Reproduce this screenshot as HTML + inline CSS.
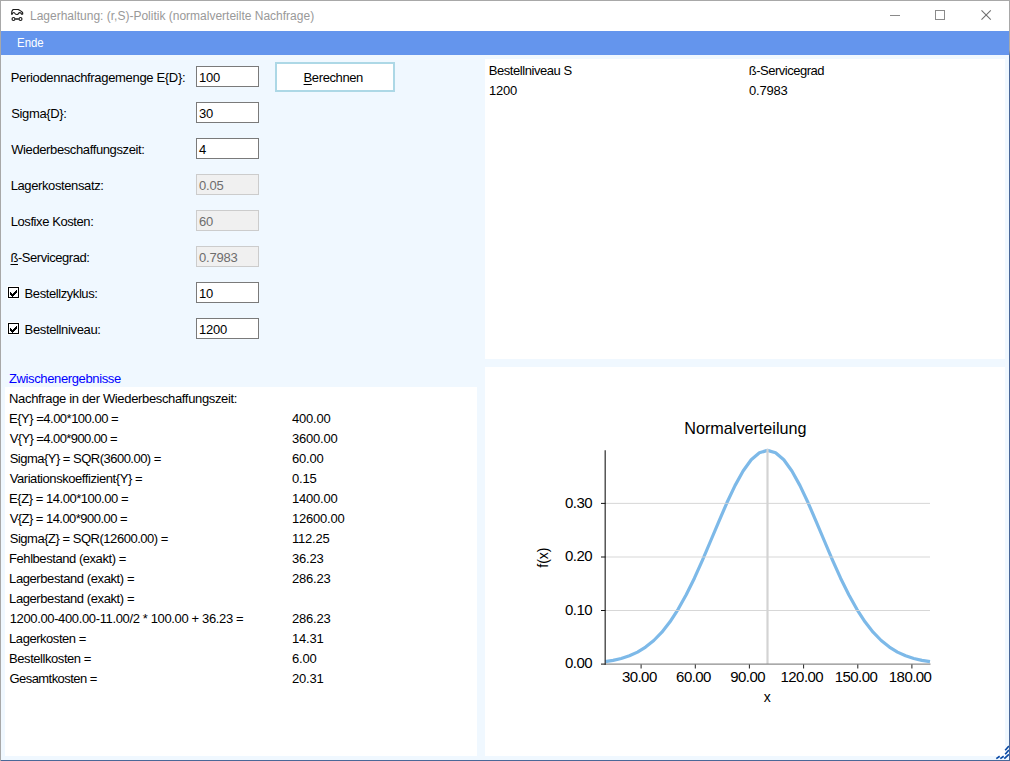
<!DOCTYPE html>
<html lang="de"><head><meta charset="utf-8"><title>Lagerhaltung: (r,S)-Politik (normalverteilte Nachfrage)</title>
<style>
html,body{margin:0;padding:0}
body{width:1010px;height:761px;position:relative;overflow:hidden;background:#4a6898;font-family:"Liberation Sans",Arial,sans-serif;font-size:13px;color:#000}
.abs,.t,.in,.pn{position:absolute}
#edgeL{left:0;top:0;width:1px;height:761px;background:#a8a8a8}
#edgeT{left:0;top:0;width:1010px;height:1px;background:#a8a8a8}
#edgeR{left:1009px;top:0;width:1px;height:761px;background:linear-gradient(#a8a8a8 0,#a8a8a8 50px,#4a6898 56px,#4a6898 100%)}
#win{left:0;top:0;width:1009px;height:760px;background:#f0f8ff}
#title{left:1px;top:1px;width:1008px;height:30px;background:#fff}
#ttext{left:30px;top:1px;height:30px;line-height:31px;font-size:12px;color:#999;white-space:pre}
#menu{left:1px;top:31px;width:1008px;height:24px;background:#6495ed}
#mtext{left:17px;top:31px;height:24px;line-height:25px;font-size:12.3px;color:#fff;white-space:pre;transform:scaleX(.93);transform-origin:0 0}
.t{white-space:pre;line-height:16px;height:16px}
.in{left:196px;width:61px;height:19px;border:1px solid #7a7a7a;background:#fff}
.in.dis{border-color:#ccc;background:#f0f0f0}
.cb{position:absolute;left:8px;width:9px;height:9px;border:1px solid #000;background:#fff;box-shadow:0 0 0 1px #fff}
.pn{background:#fff}
#btn{left:275px;top:62px;width:116px;height:26px;border:2px solid #add8e6;background:#fff}
u{text-underline-offset:1.5px;text-decoration-thickness:1px}
</style></head><body>
<div class="abs" id="win">
<div class="abs" id="title"></div>

<svg class="abs" style="left:10px;top:8px" width="16" height="16" viewBox="0 0 16 16" fill="none" stroke="#1c1c1c" stroke-width="1.2" stroke-linecap="round" stroke-linejoin="round">
<path d="M1.6 6.2 C1.4 4.5 2.0 2.4 3.1 1.5 L8.3 1.5 C9.5 2.2 11.3 3.2 12.3 4.1 C12.8 4.8 12.9 5.5 12.6 6.2 L11.6 6.2 C11.2 5.2 10.6 4.7 9.8 4.7 C9.0 4.7 8.6 5.3 8.2 5.9 C7.9 6.3 7.5 6.5 6.8 6.5 C6.0 6.5 5.5 6.3 5.2 5.8 C4.8 5.0 4.5 4.5 3.8 4.5 C3.0 4.5 2.6 5.2 2.3 6.2 Z"/>
<ellipse cx="3.5" cy="11" rx="1.45" ry="1.5"/><ellipse cx="10.5" cy="11" rx="1.45" ry="1.5"/><path d="M5.2 11 H8.8" stroke-width="1.5" stroke-linecap="butt"/>
</svg>
<div class="abs" id="ttext">Lagerhaltung: (r,S)-Politik (normalverteilte Nachfrage)</div>
<svg class="abs" style="left:881px;top:1px" width="128" height="30" viewBox="0 0 128 30" fill="none" stroke="#8a8a8a" stroke-width="1">
<path d="M9 14.5 H19"/><rect x="54.5" y="9.5" width="9" height="9"/><path d="M100.5 9.3 L109.8 18.6 M109.8 9.3 L100.5 18.6" stroke="#707070" stroke-width="1.1"/></svg>
<div class="abs" id="menu"></div><div class="abs" id="mtext">Ende</div>
<div class="pn" style="left:5px;top:387px;width:472px;height:369px"></div>
<div class="pn" style="left:485px;top:59px;width:520px;height:300px"></div>
<div class="pn" style="left:485px;top:367px;width:520px;height:389px"></div>
<div class="in" style="top:66px"></div>
<div class="in" style="top:102px"></div>
<div class="in" style="top:138px"></div>
<div class="in dis" style="top:174px"></div>
<div class="in dis" style="top:210px"></div>
<div class="in dis" style="top:246px"></div>
<div class="in" style="top:282px"></div>
<div class="in" style="top:318px"></div>
<div class="abs" id="btn"></div>
<div class="cb" style="top:287px"></div>
<svg class="abs" style="left:8px;top:287px" width="11" height="11" viewBox="0 0 11 11" shape-rendering="crispEdges" fill="#000"><rect x="2" y="5" width="1" height="3"/><rect x="3" y="6" width="1" height="3"/><rect x="4" y="7" width="1" height="3"/><rect x="5" y="6" width="1" height="3"/><rect x="6" y="5" width="1" height="3"/><rect x="7" y="4" width="1" height="3"/><rect x="8" y="3" width="1" height="3"/></svg>
<div class="cb" style="top:323px"></div>
<svg class="abs" style="left:8px;top:323px" width="11" height="11" viewBox="0 0 11 11" shape-rendering="crispEdges" fill="#000"><rect x="2" y="5" width="1" height="3"/><rect x="3" y="6" width="1" height="3"/><rect x="4" y="7" width="1" height="3"/><rect x="5" y="6" width="1" height="3"/><rect x="6" y="5" width="1" height="3"/><rect x="7" y="4" width="1" height="3"/><rect x="8" y="3" width="1" height="3"/></svg>
<div class="t" style="left:10.68px;top:69.50px;letter-spacing:-0.322px">Periodennachfragemenge E{D}:</div>
<div class="t" style="left:11.29px;top:105.50px;letter-spacing:-0.381px">Sigma{D}:</div>
<div class="t" style="left:11.20px;top:141.50px;letter-spacing:-0.384px">Wiederbeschaffungszeit:</div>
<div class="t" style="left:10.68px;top:177.50px;letter-spacing:-0.388px">Lagerkostensatz:</div>
<div class="t" style="left:10.68px;top:213.50px;letter-spacing:-0.414px">Losfixe Kosten:</div>
<div class="t" style="left:10.49px;top:249.50px;letter-spacing:-0.451px"><u>ß</u>-Servicegrad:</div>
<div class="t" style="left:24.58px;top:285.50px;letter-spacing:-0.420px">Bestellzyklus:</div>
<div class="t" style="left:24.58px;top:321.50px;letter-spacing:-0.358px">Bestellniveau:</div>
<div class="t" style="left:8.99px;top:370.50px;letter-spacing:-0.369px;color:#0000ff">Zwischenergebnisse</div>
<div class="t" style="left:303.58px;top:69.50px;letter-spacing:-0.392px"><u>B</u>erechnen</div>
<div class="t" style="left:9.08px;top:390.50px;letter-spacing:-0.347px">Nachfrage in der Wiederbeschaffungszeit:</div>
<div class="t" style="left:9.08px;top:410.50px;letter-spacing:-0.503px">E{Y} =4.00*100.00 =</div>
<div class="t" style="left:292.00px;top:410.50px;letter-spacing:-0.230px">400.00</div>
<div class="t" style="left:9.70px;top:430.50px;letter-spacing:-0.593px">V{Y} =4.00*900.00 =</div>
<div class="t" style="left:292.00px;top:430.50px;letter-spacing:-0.230px">3600.00</div>
<div class="t" style="left:9.69px;top:450.50px;letter-spacing:-0.515px">Sigma{Y} = SQR(3600.00) =</div>
<div class="t" style="left:292.00px;top:450.50px;letter-spacing:-0.230px">60.00</div>
<div class="t" style="left:9.70px;top:470.50px;letter-spacing:-0.433px">Variationskoeffizient{Y} =</div>
<div class="t" style="left:292.00px;top:470.50px;letter-spacing:-0.230px">0.15</div>
<div class="t" style="left:9.08px;top:490.50px;letter-spacing:-0.463px">E{Z} = 14.00*100.00 =</div>
<div class="t" style="left:292.00px;top:490.50px;letter-spacing:-0.230px">1400.00</div>
<div class="t" style="left:9.70px;top:510.50px;letter-spacing:-0.544px">V{Z} = 14.00*900.00 =</div>
<div class="t" style="left:292.00px;top:510.50px;letter-spacing:-0.230px">12600.00</div>
<div class="t" style="left:9.69px;top:530.50px;letter-spacing:-0.474px">Sigma{Z} = SQR(12600.00) =</div>
<div class="t" style="left:292.00px;top:530.50px;letter-spacing:-0.230px">112.25</div>
<div class="t" style="left:9.08px;top:550.50px;letter-spacing:-0.445px">Fehlbestand (exakt) =</div>
<div class="t" style="left:292.00px;top:550.50px;letter-spacing:-0.230px">36.23</div>
<div class="t" style="left:9.08px;top:570.50px;letter-spacing:-0.412px">Lagerbestand (exakt) =</div>
<div class="t" style="left:292.00px;top:570.50px;letter-spacing:-0.230px">286.23</div>
<div class="t" style="left:9.08px;top:590.50px;letter-spacing:-0.412px">Lagerbestand (exakt) =</div>
<div class="t" style="left:9.69px;top:610.50px;letter-spacing:-0.363px">1200.00-400.00-11.00/2 * 100.00 + 36.23 =</div>
<div class="t" style="left:292.00px;top:610.50px;letter-spacing:-0.230px">286.23</div>
<div class="t" style="left:9.08px;top:630.50px;letter-spacing:-0.455px">Lagerkosten =</div>
<div class="t" style="left:292.00px;top:630.50px;letter-spacing:-0.230px">14.31</div>
<div class="t" style="left:9.08px;top:650.50px;letter-spacing:-0.445px">Bestellkosten =</div>
<div class="t" style="left:292.00px;top:650.50px;letter-spacing:-0.230px">6.00</div>
<div class="t" style="left:9.49px;top:670.50px;letter-spacing:-0.556px">Gesamtkosten =</div>
<div class="t" style="left:292.00px;top:670.50px;letter-spacing:-0.230px">20.31</div>
<div class="t" style="left:488.78px;top:62.50px;letter-spacing:-0.439px">Bestellniveau S</div>
<div class="t" style="left:748.79px;top:62.50px;letter-spacing:-0.500px">ß-Servicegrad</div>
<div class="t" style="left:489.00px;top:82.50px;letter-spacing:-0.230px">1200</div>
<div class="t" style="left:749.00px;top:82.50px;letter-spacing:-0.230px">0.7983</div>
<div class="t" style="left:199.00px;top:69.50px;letter-spacing:-0.230px">100</div>
<div class="t" style="left:199.00px;top:105.50px;letter-spacing:-0.230px">30</div>
<div class="t" style="left:199.00px;top:141.50px;letter-spacing:-0.230px">4</div>
<div class="t" style="left:199.00px;top:177.50px;letter-spacing:-0.230px;color:#6d6d6d">0.05</div>
<div class="t" style="left:199.00px;top:213.50px;letter-spacing:-0.230px;color:#6d6d6d">60</div>
<div class="t" style="left:199.00px;top:249.50px;letter-spacing:-0.230px;color:#6d6d6d">0.7983</div>
<div class="t" style="left:199.00px;top:285.50px;letter-spacing:-0.230px">10</div>
<div class="t" style="left:199.00px;top:321.50px;letter-spacing:-0.230px">1200</div>
<svg class="abs" style="left:0;top:0" width="1010" height="761" viewBox="0 0 1010 761" font-family="Liberation Sans,Arial,sans-serif" fill="#000">
<polyline points="605.0,661.7 613.1,660.4 621.2,658.5 629.4,655.8 637.5,652.1 645.6,647.1 653.8,640.5 661.9,632.2 670.0,621.8 678.1,609.3 686.2,594.7 694.4,578.2 702.5,560.1 710.6,541.0 718.8,521.6 726.9,502.8 735.0,485.6 743.1,471.0 751.2,459.8 759.4,452.8 767.5,450.4 775.6,452.8 783.8,459.8 791.9,471.0 800.0,485.6 808.1,502.8 816.2,521.6 824.4,541.0 832.5,560.1 840.6,578.2 848.8,594.7 856.9,609.3 865.0,621.8 873.1,632.2 881.2,640.5 889.4,647.1 897.5,652.1 905.6,655.8 913.8,658.5 921.9,660.4 930.0,661.7" fill="none" stroke="#7db9e8" stroke-width="3.2" stroke-linejoin="round"/>
<path d="M605 610.5 H930" stroke="#d3d3d3" stroke-width="1" fill="none" opacity="0.9"/>
<path d="M605 557.0 H930" stroke="#d3d3d3" stroke-width="1" fill="none" opacity="0.9"/>
<path d="M605 503.4 H930" stroke="#d3d3d3" stroke-width="1" fill="none" opacity="0.9"/>
<path d="M767.5 449 V664" stroke="#d3d3d3" stroke-width="2.2" fill="none"/>
<path d="M605 664.2 H930.5" stroke="#8c8c8c" stroke-width="1.3" fill="none"/>
<path d="M605.2 450.3 V664.8" stroke="#3c3c3c" stroke-width="1.3" fill="none"/>
<path d="M601 664.1 H605.5" stroke="#111" stroke-width="1" fill="none"/>
<text x="592.0" y="668.3" font-size="15" letter-spacing="-0.55" text-anchor="end">0.00</text>
<path d="M601 610.5 H605.5" stroke="#111" stroke-width="1" fill="none"/>
<text x="592.0" y="614.7" font-size="15" letter-spacing="-0.55" text-anchor="end">0.10</text>
<path d="M601 557.0 H605.5" stroke="#111" stroke-width="1" fill="none"/>
<text x="592.0" y="561.2" font-size="15" letter-spacing="-0.55" text-anchor="end">0.20</text>
<path d="M601 503.4 H605.5" stroke="#111" stroke-width="1" fill="none"/>
<text x="592.0" y="507.6" font-size="15" letter-spacing="-0.55" text-anchor="end">0.30</text>
<path d="M641.1 664.5 V668.5" stroke="#222" stroke-width="1" fill="none"/>
<text x="639.3" y="681.9" font-size="15" letter-spacing="-0.55" text-anchor="middle">30.00</text>
<path d="M695.3 664.5 V668.5" stroke="#222" stroke-width="1" fill="none"/>
<text x="693.5" y="681.9" font-size="15" letter-spacing="-0.55" text-anchor="middle">60.00</text>
<path d="M749.4 664.5 V668.5" stroke="#222" stroke-width="1" fill="none"/>
<text x="747.6" y="681.9" font-size="15" letter-spacing="-0.55" text-anchor="middle">90.00</text>
<path d="M803.6 664.5 V668.5" stroke="#222" stroke-width="1" fill="none"/>
<text x="801.8" y="681.9" font-size="15" letter-spacing="-0.55" text-anchor="middle">120.00</text>
<path d="M857.8 664.5 V668.5" stroke="#222" stroke-width="1" fill="none"/>
<text x="856.0" y="681.9" font-size="15" letter-spacing="-0.55" text-anchor="middle">150.00</text>
<path d="M911.9 664.5 V668.5" stroke="#222" stroke-width="1" fill="none"/>
<text x="910.1" y="681.9" font-size="15" letter-spacing="-0.55" text-anchor="middle">180.00</text>
<text x="745.4" y="433.9" font-size="16.2" text-anchor="middle">Normalverteilung</text>
<text x="767.3" y="701.5" font-size="14" text-anchor="middle">x</text>
<text transform="translate(547.9,557.6) rotate(-90)" font-size="14" text-anchor="middle">f(x)</text>
<g stroke="#fff" stroke-width="1.5" fill="none"><path d="M1008.7 745 L1004.7 749.3 M1008.7 749 L1004.7 753.3 M1008.7 753.3 L1003.7 757.6 M1003.5 755.2 L1000 757.6 M999.5 755.2 L996 757.6"/></g>
<g stroke="#0a4aa6" stroke-width="1.7" fill="none"><path d="M1008.9 746 L1005.2 750.3 M1008.9 750 L1005.2 754.3 M1008.9 754.3 L1004.3 758.6 M1003.7 756.2 L1000.3 758.6 M999.7 756.2 L996.3 758.6"/></g>
</svg>
</div>
<div class="abs" id="edgeL"></div><div class="abs" id="edgeT"></div><div class="abs" id="edgeR"></div>
</body></html>
